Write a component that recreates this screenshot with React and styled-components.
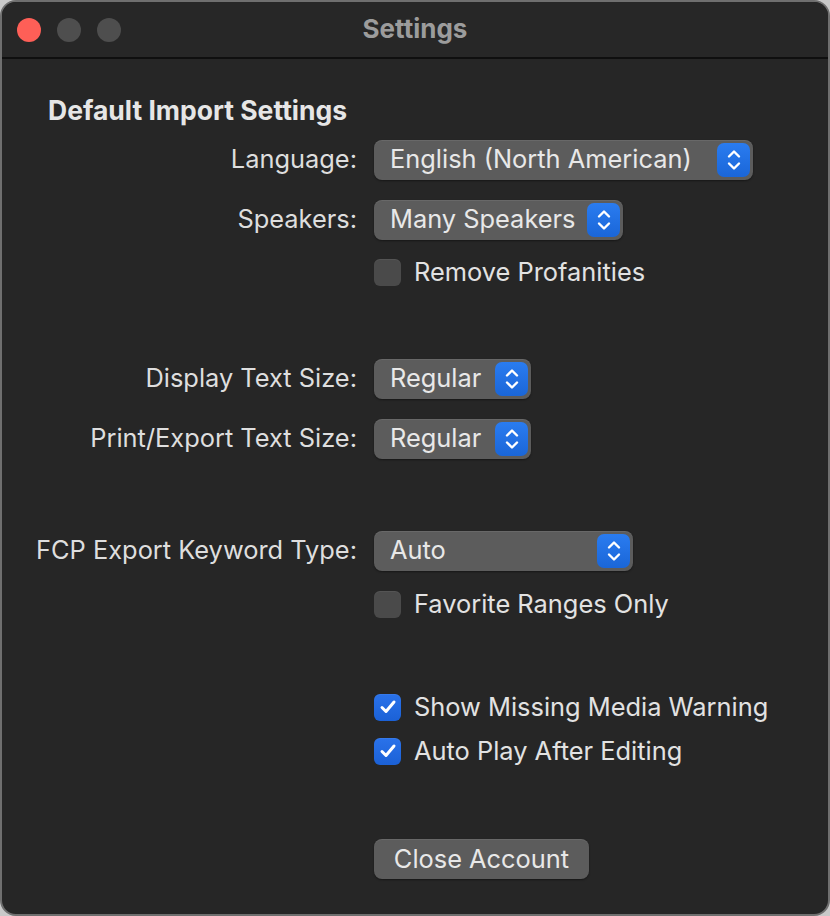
import React from 'react';
import styled, { createGlobalStyle } from 'styled-components';

const GlobalStyle = createGlobalStyle`
  html, body {
    margin: 0;
    padding: 0;
    background: #c9c9c9;
  }
  body {
    font-family: Inter, "Noto Sans", "Liberation Sans", sans-serif;
  }
`;

function Stepper() {
  return (
    <StepperBox>
      <svg width="16" height="26" viewBox="0 0 16 26" fill="none" stroke="#fff" strokeWidth="2.4" strokeLinecap="round" strokeLinejoin="round">
        <polyline points="3,9.5 8,4.5 13,9.5" />
        <polyline points="3,16.5 8,21.5 13,16.5" />
      </svg>
    </StepperBox>
  );
}

function Popup({ value, width }) {
  return (
    <PopupButton $width={width}>
      <PopupText>{value}</PopupText>
      <Stepper />
    </PopupButton>
  );
}

function Check({ checked, label }) {
  return (
    <CheckLabel>
      <Box $checked={checked}>
        {checked && (
          <svg width="18" height="16" viewBox="0 0 18 16" fill="none" stroke="#fff" strokeWidth="3" strokeLinecap="round" strokeLinejoin="round">
            <polyline points="3,8.5 7,12.5 15,3" />
          </svg>
        )}
      </Box>
      {label}
    </CheckLabel>
  );
}

export default function App() {
  return (
    <>
      <GlobalStyle />
      <Window>
        <TitleBar>
          <Lights>
            <Light $color="#fe5f57" />
            <Light $color="#4e4e4e" />
            <Light $color="#4e4e4e" />
          </Lights>
          <Title>Settings</Title>
        </TitleBar>
        <Content>
          <Heading>Default Import Settings</Heading>

          <Row $top={14}>
            <Label>Language:</Label>
            <Popup value="English (North American)" width={379} />
          </Row>
          <Row $top={20}>
            <Label>Speakers:</Label>
            <Popup value="Many Speakers" width={249} />
          </Row>
          <Row $top={18}>
            <span />
            <Check label="Remove Profanities" />
          </Row>

          <Row $top={73}>
            <Label>Display Text Size:</Label>
            <Popup value="Regular" width={157} />
          </Row>
          <Row $top={20}>
            <Label>Print/Export Text Size:</Label>
            <Popup value="Regular" width={157} />
          </Row>

          <Row $top={72}>
            <Label>FCP Export Keyword Type:</Label>
            <Popup value="Auto" width={259} />
          </Row>
          <Row $top={19}>
            <span />
            <Check label="Favorite Ranges Only" />
          </Row>

          <Row $top={75}>
            <span />
            <Check checked label="Show Missing Media Warning" />
          </Row>
          <Row $top={16}>
            <span />
            <Check checked label="Auto Play After Editing" />
          </Row>

          <Row $top={74}>
            <span />
            <PushButton>Close Account</PushButton>
          </Row>
        </Content>
      </Window>
    </>
  );
}

const Window = styled.div`
  box-sizing: border-box;
  width: 830px;
  height: 916px;
  background: #262626;
  border: 2px solid #6f6f6f;
  border-radius: 16px;
  overflow: hidden;
  display: flex;
  flex-direction: column;
`;

const TitleBar = styled.div`
  height: 55px;
  flex-shrink: 0;
  display: flex;
  align-items: center;
  position: relative;
  border-bottom: 2px solid #0f0f0f;
  background: #272727;
`;

const Lights = styled.div`
  display: flex;
  gap: 16px;
  padding-left: 15px;
`;

const Light = styled.span`
  width: 24px;
  height: 24px;
  border-radius: 50%;
  background: ${(p) => p.$color};
`;

const Title = styled.div`
  position: absolute;
  left: 0;
  right: 0;
  top: 0;
  bottom: 0;
  display: flex;
  align-items: center;
  justify-content: center;
  font-weight: 700;
  font-size: 26px;
  color: #9c9c9c;
  padding-bottom: 3px;
  pointer-events: none;
`;

const Content = styled.div`
  display: flex;
  flex-direction: column;
  padding-top: 35px;
`;

const Heading = styled.h2`
  margin: 0 0 0 46px;
  font-size: 26.5px;
  font-weight: 700;
  color: #e6e6e6;
  line-height: 32px;
`;

const Row = styled.div`
  display: grid;
  grid-template-columns: 355px auto;
  column-gap: 17px;
  align-items: center;
  margin-top: ${(p) => p.$top}px;
`;

const Label = styled.span`
  text-align: right;
  font-size: 25.4px;
  color: #dedede;
  line-height: 30px;
  padding-bottom: 2px;
`;

const PopupButton = styled.div`
  box-sizing: border-box;
  width: ${(p) => p.$width}px;
  height: 40px;
  display: flex;
  align-items: center;
  justify-content: space-between;
  padding: 0 3px 0 16px;
  background: #5c5c5c;
  border-radius: 8px;
  box-shadow: inset 0 1px 0 rgba(255, 255, 255, 0.08), 0 1px 2px rgba(0, 0, 0, 0.4);
`;

const PopupText = styled.span`
  font-size: 25.4px;
  line-height: 30px;
  color: #e8e8e8;
  white-space: nowrap;
  padding-bottom: 2px;
`;

const StepperBox = styled.span`
  width: 33px;
  height: 34px;
  border-radius: 7px;
  background: linear-gradient(#2a7cf0, #1a66d8);
  display: flex;
  align-items: center;
  justify-content: center;
`;

const CheckLabel = styled.label`
  display: flex;
  align-items: center;
  gap: 13px;
  font-size: 25.4px;
  line-height: 28px;
  color: #e2e2e2;
  height: 28px;
`;

const Box = styled.span`
  width: 27px;
  height: 27px;
  border-radius: 6px;
  display: flex;
  align-items: center;
  justify-content: center;
  background: ${(p) => (p.$checked ? 'linear-gradient(#2a72ea, #1b61d6)' : '#4a4a4a')};
  box-shadow: inset 0 1px 0 rgba(255, 255, 255, 0.06);
`;

const PushButton = styled.button`
  justify-self: start;
  width: 215px;
  height: 40px;
  border: none;
  border-radius: 8px;
  background: #5c5c5c;
  color: #e8e8e8;
  font-family: inherit;
  font-size: 25.4px;
  padding: 0 0 2px;
  box-shadow: inset 0 1px 0 rgba(255, 255, 255, 0.08), 0 1px 2px rgba(0, 0, 0, 0.4);
`;
